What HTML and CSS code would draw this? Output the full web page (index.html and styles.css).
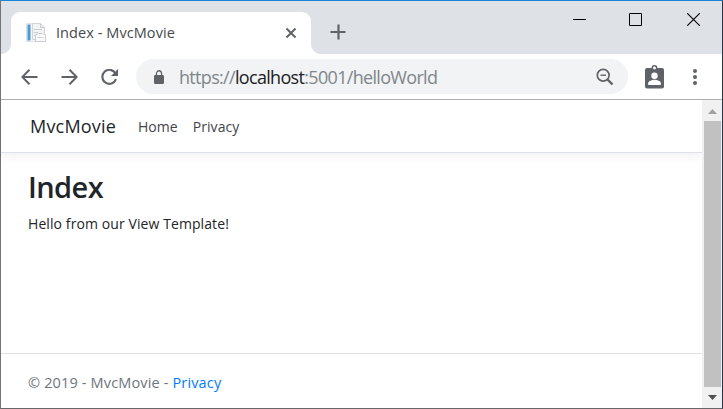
FILE: index.html
```html
<!DOCTYPE html>
<html lang="en">
<head>
<meta charset="utf-8">
<title>Index - MvcMovie</title>
<link rel="stylesheet" href="styles.css">
</head>
<body>
<div class="window">
  <div class="tabstrip">
    <div class="foot foot-left"></div>
    <div class="tab">
      <svg class="favicon" width="20" height="20" viewBox="0 0 20 20">
        <path d="M.5.5h13v18H.5z" fill="#f3f4f5" stroke="#dfe1e3"/>
        <path d="M1.500 1.500h3v16h-3z" fill="#4b9bd2"/>
        <path d="M6.500.5h8l4 4v12h-12z" fill="#f1f3f4" stroke="#d2d5d8"/>
        <path d="M14.500.5v4h4M8 6.500h8M8 9.500h4M8 12.500h2" fill="none" stroke="#c9cdd1"/>
        <path d="M9.500 11.500h2l1-1h4l1 1h2v7h-10z" fill="#fafafa" stroke="#cbced1"/>
        <path d="M11 14.500h7" stroke="#d5d8da"/>
      </svg>
      <span class="tab-title">Index - MvcMovie</span>
      <svg class="tab-close" width="12" height="12" viewBox="0 0 12 12"><path d="M1.500 1.500l9 9m0-9l-9 9" stroke="#5f6368" stroke-width="2"/></svg>
    </div>
    <div class="foot foot-right"></div>
    <svg class="new-tab" width="16" height="16" viewBox="0 0 16 16"><path d="M8.500 .5v15M.5 8h15" stroke="#5f6368" stroke-width="2.200"/></svg>
    <div class="captions">
      <svg width="13" height="13" viewBox="0 0 13 13"><path d="M0 6.500h13" stroke="#000"/></svg>
      <svg class="maximize" width="13" height="13" viewBox="0 0 13 13"><path d="M.5.5h12v12H.5z" fill="none" stroke="#000"/></svg>
      <svg width="13" height="13" viewBox="0 0 13 13"><path d="M.2.2l12.600 12.600m0-12.600L.2 12.800" stroke="#000" stroke-width="1.100"/></svg>
    </div>
  </div>
  <div class="toolbar">
    <div class="nav-buttons">
      <svg width="17" height="16" viewBox="0 0 17 16"><path d="M16.500 8H2M8.500.8L1.300 8l7.200 7.200" fill="none" stroke="#5f6368" stroke-width="2"/></svg>
      <svg width="17" height="16" viewBox="0 0 17 16"><path d="M.5 8H15M8.500.8L15.700 8l-7.200 7.200" fill="none" stroke="#5f6368" stroke-width="2"/></svg>
      <svg width="17" height="16" viewBox="0 0 17 16"><path d="M14.400 4.200A7 7 0 1 0 15 10.200" fill="none" stroke="#5f6368" stroke-width="2.100"/><path d="M17 0v7h-7z" fill="#5f6368"/></svg>
    </div>
    <div class="omnibox">
      <svg class="lock" width="10" height="14" viewBox="0 0 11 14" preserveAspectRatio="none"><rect y="5" width="11" height="9" rx="1.300" fill="#5f6368"/><path d="M2.700 5.500V3.600a2.800 2.800 0 0 1 5.600 0v1.900" fill="none" stroke="#5f6368" stroke-width="1.400"/></svg>
      <span class="url">https://<b>localhost</b>:5001/helloWorld</span>
      <svg class="zoom-out" width="18" height="18" viewBox="0 0 18 18"><circle cx="7.200" cy="7.200" r="5.900" fill="none" stroke="#5f6368" stroke-width="1.700"/><path d="M4.500 7.200h5.500" stroke="#5f6368" stroke-width="1.400"/><path d="M11.500 11.500l5 5" stroke="#5f6368" stroke-width="2.400"/></svg>
    </div>
    <svg class="profile" width="19" height="24" viewBox="0 0 19 24"><rect y="3" width="19" height="20.500" rx="2" fill="#5f6368"/><circle cx="9.500" cy="3" r="2.200" fill="#fff" stroke="#5f6368" stroke-width="1.500"/><circle cx="9.500" cy="10.800" r="3.200" fill="#fff"/><path d="M3.200 20v-1.800c0-2.200 4.200-3.400 6.300-3.400s6.300 1.200 6.300 3.400V20z" fill="#fff"/></svg>
    <svg class="menu" width="4" height="16" viewBox="0 0 4 16" fill="#5f6368"><circle cx="2" cy="2" r="2"/><circle cx="2" cy="8" r="2"/><circle cx="2" cy="14" r="2"/></svg>
  </div>
  <div class="viewport">
    <div class="page">
      <header class="navbar">
        <span class="brand">MvcMovie</span>
        <span class="link home">Home</span>
        <span class="link privacy">Privacy</span>
      </header>
      <main>
        <h1><span>Index</span></h1>
        <p><span>Hello from our View Template!</span></p>
      </main>
      <footer><span class="copyright">© 2019 - MvcMovie - <a>Privacy</a></span></footer>
    </div>
    <div class="scrollbar">
      <svg width="9" height="5" viewBox="0 0 9 5"><path d="M0 5l4.500-5L9 5z" fill="#a0a0a0"/></svg>
      <div class="thumb"></div>
      <svg width="9" height="5" viewBox="0 0 9 5"><path d="M0 0l4.500 5L9 0z" fill="#505050"/></svg>
    </div>
  </div>
</div>
</body>
</html>
```
FILE: styles.css
```css
* { box-sizing: border-box; }
body { margin: 0; font-family: "Open Sans", "Noto Sans", sans-serif; overflow: hidden; }
svg { display: block; flex: none; }
span { white-space: nowrap; }
.window {
  width: 723px; height: 409px; display: flex; flex-direction: column; background: #fff;
  border: 1px solid; border-color: #1883d7 #2a3444 #67676a #747476;
}
.tabstrip { height: 53px; display: flex; align-items: flex-end; background: #dee1e6; }
.tab {
  width: 300px; height: 42px; background: #fff; border-radius: 9px 9px 0 0;
  display: flex; align-items: center; padding: 0 14px 0 15px;
}
.foot { width: 10px; height: 10px; }
.foot-left { background: radial-gradient(circle at 0 0, transparent 9.500px, #fff 10.500px); }
.foot-right { background: radial-gradient(circle at 100% 0, transparent 9.500px, #fff 10.500px); }
.tab-title { margin-left: 10px; font-size: 14.500px; line-height: 20px; letter-spacing: 0.070px; color: #45494d; }
.tab-close { margin-left: auto; }
.new-tab { margin: 0 0 14px 9px; }
.captions { display: flex; gap: 44px; margin: 0 22px 28px auto; }
.maximize { margin: 0 1px 0 -1px; }
.toolbar {
  height: 46px; display: flex; align-items: center; border-bottom: 1px solid #b0b0b2;
  padding: 0 25px 0 20px;
}
.nav-buttons { display: flex; gap: 23px; }
.omnibox {
  width: 492px; height: 35px; margin-left: 18px; border-radius: 18px; background: #f1f3f4;
  display: flex; align-items: center; padding: 0 14px 0 18px;
}
.url { margin-left: 15px; font-size: 18px; line-height: 26px; letter-spacing: -0.680px; color: #80868b; }
.url b { font-weight: inherit; color: #202124; }
.zoom-out { margin-left: auto; }
.profile { margin-left: 17px; }
.menu { margin-left: auto; }
.viewport { flex: 1; display: flex; min-height: 0; }
.page { flex: 1; display: flex; flex-direction: column; }
.navbar {
  height: 53px; display: flex; align-items: center; padding-left: 29px;
  border-bottom: 1px solid #dee2e6; box-shadow: 0 4px 10px rgba(0, 0, 0, .05);
}
.brand { width: 86px; font-size: 18px; letter-spacing: 0.200px; color: #212529; }
.link { font-size: 14px; color: #3f454b; letter-spacing: 0.050px; }
.home { margin-left: 22px; }
.privacy { margin-left: 15px; }
main { flex: 1; padding: 15px 27px 0; color: #212529; }
h1 { margin: 0; font-size: 29px; line-height: 38px; font-weight: 600; letter-spacing: -0.600px; }
p { margin: 7px 0 0; font-size: 14px; line-height: 22px; letter-spacing: 0.090px; }
footer {
  height: 55px; border-top: 1px solid #dee2e6; padding: 0 27px 0; line-height: 58px;
  font-size: 14.500px; letter-spacing: 0.150px; color: #6c757d;
}
footer a { color: #007bff; }
.scrollbar {
  width: 20px; background: #f1f1f1; display: flex; flex-direction: column; align-items: center;
  padding: 9px 0 8px;
}
.thumb { width: 17px; height: 266px; margin: 7px 0 8px; background: #c1c1c1; }
```
